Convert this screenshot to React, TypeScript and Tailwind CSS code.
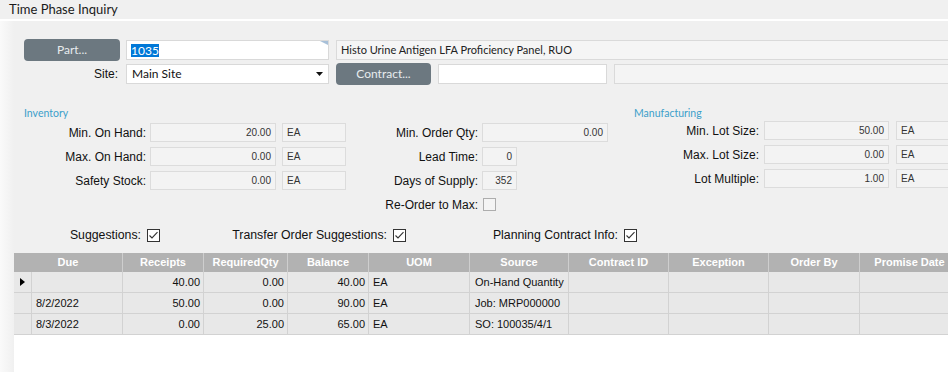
import React from "react";

const sans = "font-['Liberation_Sans',Arial,sans-serif]";
const ui = "font-['Lato',sans-serif]";

function GrayButton({ label, className }: { label: string; className: string }) {
    return (
        <div
            className={`h-[22px] rounded-[4px] bg-[#6c7880] text-[#e8ecee] text-[12px] flex items-center justify-center ${ui} ${className}`}
        >
            {label}
        </div>
    );
}

function CheckBox({ checked }: { checked: boolean }) {
    return (
        <svg width="13" height="13" viewBox="0 0 13 13" className="shrink-0">
            <rect
                x="0.5"
                y="0.5"
                width="12"
                height="12"
                fill={checked ? "#ffffff" : "#f4f4f4"}
                stroke={checked ? "#333333" : "#adadad"}
            />
            {checked && <polyline points="2.5,6.5 5,9 10.5,3.2" fill="none" stroke="#333333" strokeWidth="1.1" />}
        </svg>
    );
}

const roField = "h-[19px] bg-[#f3f3f3] border border-[#dcdcdc] text-[10px] text-[#333] flex items-center shrink-0";

function FieldRow({
    label,
    labelW,
    gap,
    value,
    valueW,
    uomGap,
    uomW,
}: {
    label: string;
    labelW: string;
    gap: string;
    value: string;
    valueW: string;
    uomGap?: string;
    uomW?: string;
}) {
    return (
        <div className="flex items-center h-[19px]">
            <span className={`${labelW} shrink-0 text-right text-[12px] text-[#111] whitespace-nowrap`}>{label}</span>
            <div className={`${roField} ${gap} ${valueW} justify-end pr-[4px]`}>{value}</div>
            {uomW && <div className={`${roField} ${uomGap} ${uomW} pl-[4px]`}>EA</div>}
        </div>
    );
}

const cols = [
    { label: "Receipts", w: "w-[81px]" },
    { label: "RequiredQty", w: "w-[84px]" },
    { label: "Balance", w: "w-[81px]" },
    { label: "UOM", w: "w-[101px]" },
    { label: "Source", w: "w-[99px]" },
    { label: "Contract ID", w: "w-[100px]" },
    { label: "Exception", w: "w-[100px]" },
    { label: "Order By", w: "w-[91px]" },
    { label: "Promise Date", w: "w-[100px]" },
];

const rows = [
    { due: "", receipts: "40.00", req: "0.00", bal: "40.00", uom: "EA", source: "On-Hand Quantity", current: true },
    { due: "8/2/2022", receipts: "50.00", req: "0.00", bal: "90.00", uom: "EA", source: "Job: MRP000000" },
    { due: "8/3/2022", receipts: "0.00", req: "25.00", bal: "65.00", uom: "EA", source: "SO: 100035/4/1" },
];

const cell = "h-full shrink-0 border-r border-[#d2d2d2] flex items-center overflow-hidden whitespace-nowrap";

export default function App() {
    return (
        <div className={`w-[948px] h-[372px] overflow-hidden bg-[#f0f0f0] text-[#111] ${sans}`}>
            <div className={`h-[19px] pl-[9px] flex items-center text-[13px] text-[#1a1a1a] ${ui}`}>Time Phase Inquiry</div>
            <div className="h-[2px] bg-white" />
            <div className="flex h-[351px]">
                <div className="w-[14px] shrink-0 bg-gradient-to-r from-[#fafafa] to-[#f0f0f0]" />
                <div className="flex-1 min-w-0 flex flex-col">
                    {/* part row */}
                    <div className="flex items-start mt-[18px] h-[22px]">
                        <GrayButton label="Part..." className="ml-[10px] w-[96px] shrink-0" />
                        <div className={`relative ml-[6px] mt-[1px] w-[203px] h-[20px] shrink-0 bg-white border border-[#d9d9d9] pl-[4px] flex items-center ${ui}`}>
                            <span className="bg-[#0078d7] text-white text-[12px] leading-[13px]">1035</span>
                            <svg width="8" height="4" viewBox="0 0 8 4" className="absolute right-0 top-0">
                                <polygon points="0,0 8,0 8,4" fill="#a8c0d8" />
                            </svg>
                        </div>
                        <div className={`ml-[7px] mt-[1px] flex-1 -mr-[2px] h-[20px] bg-[#f5f5f5] border border-[#dadada] pl-[4px] flex items-center text-[11px] text-[#222] whitespace-nowrap ${ui}`}>
                            Histo Urine Antigen LFA Proficiency Panel, RUO
                        </div>
                    </div>

                    {/* site row */}
                    <div className="flex items-start mt-[2px] h-[22px]">
                        <span className="w-[104px] shrink-0 mt-[1px] text-right text-[12px] leading-[20px]">Site:</span>
                        <div className={`ml-[8px] mt-[1px] w-[203px] h-[20px] shrink-0 bg-white border border-[#d9d9d9] pl-[5px] pr-[5px] flex items-center justify-between text-[12px] ${ui}`}>
                            <span>Main Site</span>
                            <svg width="7" height="4" viewBox="0 0 7 4">
                                <polygon points="0,0 7,0 3.5,4" fill="#111" />
                            </svg>
                        </div>
                        <GrayButton label="Contract..." className="ml-[7px] w-[95px] shrink-0" />
                        <div className="ml-[7px] mt-[1px] w-[169px] h-[20px] shrink-0 bg-white border border-[#d9d9d9]" />
                        <div className="ml-[7px] mt-[1px] flex-1 -mr-[2px] h-[20px] bg-[#f4f4f4] border border-[#dadada]" />
                    </div>

                    {/* sections */}
                    <div className="flex mt-[21px]">
                        <div className="w-[332px] shrink-0">
                            <div className={`h-[14px] pl-[10px] text-[10.5px] leading-[14px] text-[#3c9fca] ${ui}`}>Inventory</div>
                            <div className="mt-[3px] flex flex-col gap-[5px]">
                                <FieldRow label="Min. On Hand:" labelW="w-[132px]" gap="ml-[4px]" value="20.00" valueW="w-[126px]" uomGap="ml-[6px]" uomW="w-[64px]" />
                                <FieldRow label="Max. On Hand:" labelW="w-[132px]" gap="ml-[4px]" value="0.00" valueW="w-[126px]" uomGap="ml-[6px]" uomW="w-[64px]" />
                                <FieldRow label="Safety Stock:" labelW="w-[132px]" gap="ml-[4px]" value="0.00" valueW="w-[126px]" uomGap="ml-[6px]" uomW="w-[64px]" />
                            </div>
                        </div>
                        <div className="w-[274px] shrink-0 pt-[17px] flex flex-col gap-[5px]">
                            <FieldRow label="Min. Order Qty:" labelW="w-[132px]" gap="ml-[4px]" value="0.00" valueW="w-[126px]" />
                            <FieldRow label="Lead Time:" labelW="w-[132px]" gap="ml-[4px]" value="0" valueW="w-[35px]" />
                            <FieldRow label="Days of Supply:" labelW="w-[132px]" gap="ml-[4px]" value="352" valueW="w-[35px]" />
                            <div className="flex items-center h-[19px]">
                                <span className="w-[132px] shrink-0 text-right text-[12px] whitespace-nowrap">Re-Order to Max:</span>
                                <div className="ml-[5px]">
                                    <CheckBox checked={false} />
                                </div>
                            </div>
                        </div>
                        <div className="flex-1 min-w-0 overflow-hidden">
                            <div className={`h-[14px] pl-[14px] text-[10.5px] leading-[14px] text-[#3c9fca] ${ui}`}>Manufacturing</div>
                            <div className="mt-[1px] flex flex-col gap-[5px]">
                                <FieldRow label="Min. Lot Size:" labelW="w-[139px]" gap="ml-[5px]" value="50.00" valueW="w-[125px]" uomGap="ml-[7px]" uomW="w-[60px]" />
                                <FieldRow label="Max. Lot Size:" labelW="w-[139px]" gap="ml-[5px]" value="0.00" valueW="w-[125px]" uomGap="ml-[7px]" uomW="w-[60px]" />
                                <FieldRow label="Lot Multiple:" labelW="w-[139px]" gap="ml-[5px]" value="1.00" valueW="w-[125px]" uomGap="ml-[7px]" uomW="w-[60px]" />
                            </div>
                        </div>
                    </div>

                    {/* checkboxes */}
                    <div className="flex items-center mt-[13px] h-[17px] text-[12.3px]">
                        <div className="w-[146px] shrink-0 flex items-center justify-end gap-[6px]">
                            <span>Suggestions:</span>
                            <CheckBox checked />
                        </div>
                        <div className="w-[246px] shrink-0 flex items-center justify-end gap-[6px]">
                            <span>Transfer Order Suggestions:</span>
                            <CheckBox checked />
                        </div>
                        <div className="w-[231px] shrink-0 flex items-center justify-end gap-[6px]">
                            <span>Planning Contract Info:</span>
                            <CheckBox checked />
                        </div>
                    </div>

                    {/* grid */}
                    <div className="mt-[9px] flex-1 bg-white flex flex-col overflow-hidden">
                        <div className="flex h-[19px] shrink-0 bg-[#b2b2b2] text-white font-bold text-[11px]">
                            <div className="w-[109px] shrink-0 border-r border-[#cecece] flex items-center justify-center">Due</div>
                            {cols.map((c) => (
                                <div key={c.label} className={`${c.w} shrink-0 border-r border-[#cecece] flex items-center justify-center whitespace-nowrap`}>
                                    {c.label}
                                </div>
                            ))}
                        </div>
                        {rows.map((r, i) => (
                            <div key={i} className="flex h-[21px] shrink-0 bg-[#e8e8e8] border-b border-[#d2d2d2] text-[11px] text-[#111]">
                                <div className={`${cell} w-[18px] justify-center`}>
                                    {r.current && (
                                        <svg width="5" height="8" viewBox="0 0 5 8">
                                            <polygon points="0,0 5,4 0,8" fill="#000" />
                                        </svg>
                                    )}
                                </div>
                                <div className={`${cell} w-[91px] pl-[4px]`}>{r.due}</div>
                                <div className={`${cell} w-[81px] justify-end pr-[3px]`}>{r.receipts}</div>
                                <div className={`${cell} w-[84px] justify-end pr-[3px]`}>{r.req}</div>
                                <div className={`${cell} w-[81px] justify-end pr-[3px]`}>{r.bal}</div>
                                <div className={`${cell} w-[101px] pl-[4px]`}>{r.uom}</div>
                                <div className={`${cell} w-[99px] pl-[5px]`}>{r.source}</div>
                                <div className={`${cell} w-[100px]`} />
                                <div className={`${cell} w-[100px]`} />
                                <div className={`${cell} w-[91px]`} />
                                <div className={`${cell} w-[100px]`} />
                            </div>
                        ))}
                    </div>
                </div>
            </div>
        </div>
    );
}
